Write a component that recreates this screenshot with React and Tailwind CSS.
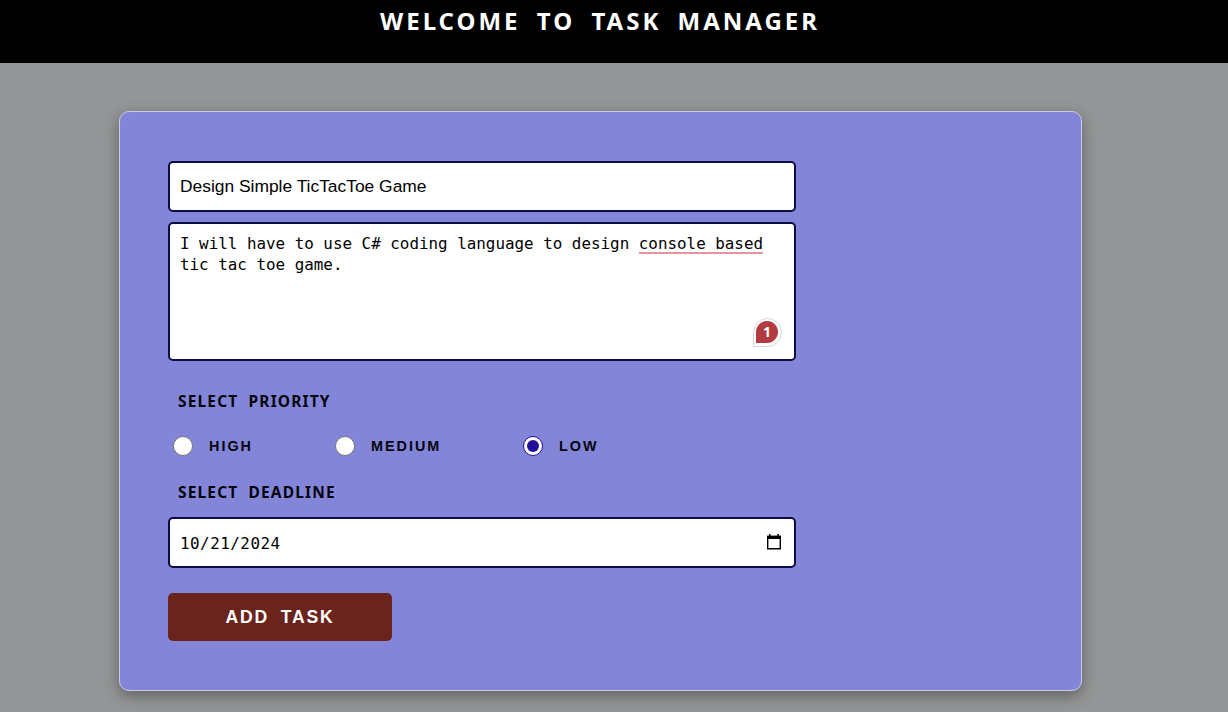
const fieldBox =
  "w-[628px] rounded-[5px] border-2 border-[#0d0d45] bg-white px-[10px] text-black";

function SectionLabel({ children, className }) {
  return (
    <h2
      className={`pl-[10px] font-['Noto_Sans','Open_Sans',sans-serif] text-[15.5px] font-bold leading-5 tracking-[1.15px] [word-spacing:5px] whitespace-nowrap text-[#05050c] ${className}`}
    >
      {children}
    </h2>
  );
}

function Radio({ label, checked, className }) {
  return (
    <label className={`flex items-center gap-4 ${className}`}>
      <span
        className={`flex size-5 shrink-0 items-center justify-center rounded-full border bg-white ${
          checked ? "border-[#23109a]" : "border-[#767676]"
        }`}
      >
        {checked && <span className="size-3 rounded-full bg-[#23109a]" />}
      </span>
      <span className="text-[14.4px] font-bold leading-5 tracking-[2px] text-[#05050c]">
        {label}
      </span>
    </label>
  );
}

function CalendarIcon() {
  return (
    <svg width="14" height="16" viewBox="0 0 14 16" fill="none" className="-mt-px">
      <path d="M0.7 2.5H13.3V14.8H0.7Z" stroke="#000" strokeWidth="1.4" />
      <path d="M0 1.8H14V5H0Z" fill="#000" />
      <path d="M2.8 0V2.5M11.2 0V2.5" stroke="#000" strokeWidth="1.5" />
    </svg>
  );
}

export default function App() {
  return (
    <div className="flex h-[712px] flex-col items-start overflow-hidden bg-[#949596] font-['Liberation_Sans',Arial,sans-serif]">
      <header className="flex h-[63px] w-full shrink-0 justify-center bg-black pr-[28px] pt-[5px]">
        <h1 className="font-['Noto_Sans','Open_Sans',sans-serif] text-[24px] font-bold leading-8 tracking-[3px] [word-spacing:7px] whitespace-nowrap text-white">
          WELCOME TO TASK MANAGER
        </h1>
      </header>

      <main className="ml-[119px] mt-12 flex h-[580px] w-[963px] shrink-0 flex-col items-start rounded-[10px] border border-[#cccce0] bg-[#8385d8] pl-12 pt-[49px] shadow-[0_5px_15px_rgba(0,0,0,0.35)]">
        <div className={`${fieldBox} flex h-[51px] items-center text-[17.4px]`}>
          Design Simple TicTacToe Game
        </div>

        <div
          className={`${fieldBox} relative mt-[10px] h-[138.5px] pt-[10px] font-['DejaVu_Sans_Mono',monospace] text-[15.88px] leading-[20.5px] whitespace-nowrap`}
        >
          I will have to use C# coding language to design{" "}
          <span className="inline-block h-[20px] border-b-2 border-[#e693a3]">console based</span>
          <br />
          tic tac toe game.
          <span className="absolute bottom-[12px] right-[12.5px] flex size-[29px] items-center justify-center rounded-full rounded-bl-none border border-[#d5d5dc] bg-white">
            <span className="flex size-[22px] items-center justify-center rounded-full rounded-bl-[1px] bg-[#b13b40] font-['Noto_Sans',sans-serif] text-[14px] font-bold leading-none text-white">
              1
            </span>
          </span>
        </div>

        <SectionLabel className="mt-[30.5px]">SELECT PRIORITY</SectionLabel>

        <div className="mt-[24.5px] flex items-center pl-[5px]">
          <Radio label="HIGH" className="w-[162px]" />
          <Radio label="MEDIUM" className="w-[188px]" />
          <Radio label="LOW" checked />
        </div>

        <SectionLabel className="mt-[26.5px]">SELECT DEADLINE</SectionLabel>

        <div
          className={`${fieldBox} mt-[15px] flex h-[51px] items-center justify-between pr-[13px] font-['DejaVu_Sans_Mono',monospace] text-[15.88px]`}
        >
          <span className="pt-0.5 tracking-[0.5px]">10/21/2024</span>
          <CalendarIcon />
        </div>

        <button className="mt-[25px] h-12 w-[224px] rounded-[5px] bg-[#6b241c] text-[17.6px] font-bold tracking-[1.8px] [word-spacing:5px] text-white">
          ADD TASK
        </button>
      </main>
    </div>
  );
}
